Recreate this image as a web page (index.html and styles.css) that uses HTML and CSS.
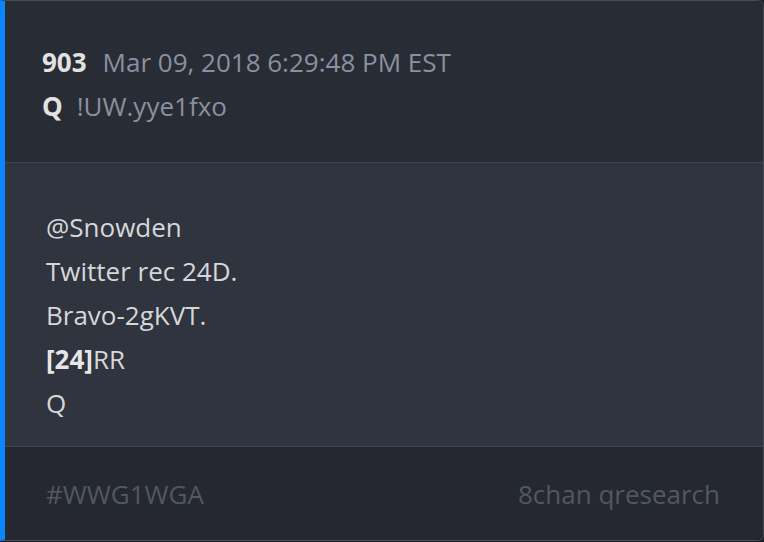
FILE: index.html
```html
<!DOCTYPE html>
<html lang="en">
<head>
  <meta charset="UTF-8" />
  <title>Q Post 903</title>
  <link rel="stylesheet" href="styles.css">
</head>
<body>

  <article class="post">
    <header class="post-head">
      <p class="meta"><span class="num">903</span><span class="date">Mar 09, 2018 6:29:48 PM EST</span></p>
      <p class="meta"><span class="num q">Q</span><span class="trip">!UW.yye1fxo</span></p>
    </header>

    <section class="post-body">
      <p>@Snowden</p>
      <p>Twitter rec 24D.</p>
      <p>Bravo-2gKVT.</p>
      <p><b>[24]</b>RR</p>
      <p>Q</p>
    </section>

    <footer class="post-foot">
      <span>#WWG1WGA</span>
      <span>8chan qresearch</span>
    </footer>
  </article>

</body>
</html>
```

FILE: styles.css
```css
*{margin:0;padding:0;box-sizing:border-box;}
body{font-family:'Open Sans',sans-serif;background:#1f2228;width:764px;height:542px;overflow:hidden;}

.post{width:764px;height:541px;border:1px solid #454a55;border-left:5px solid #0a84ff;border-radius:0 7px 7px 0;overflow:hidden;display:flex;flex-direction:column;}

.post-head{background:#282c34;height:162px;padding:39px 0 0 37px;border-bottom:1px solid #3f4550;}
.meta{font-size:26px;line-height:44px;color:#8a90a0;}
.num{font-weight:bold;color:#e2e2e2;margin-right:16px;}
.num.q{margin-right:14px;}

.post-body{background:#2f343e;flex:1;padding:42px 0 0 41px;border-bottom:1px solid #3f4550;}
.post-body p{font-size:26px;line-height:44px;color:#d6d7d9;}
.post-body b{color:#e6e6e6;}

.post-foot{background:#252830;height:93px;display:flex;justify-content:space-between;align-items:center;padding:0 43px 0 41px;font-size:26px;color:#515764;}
```
